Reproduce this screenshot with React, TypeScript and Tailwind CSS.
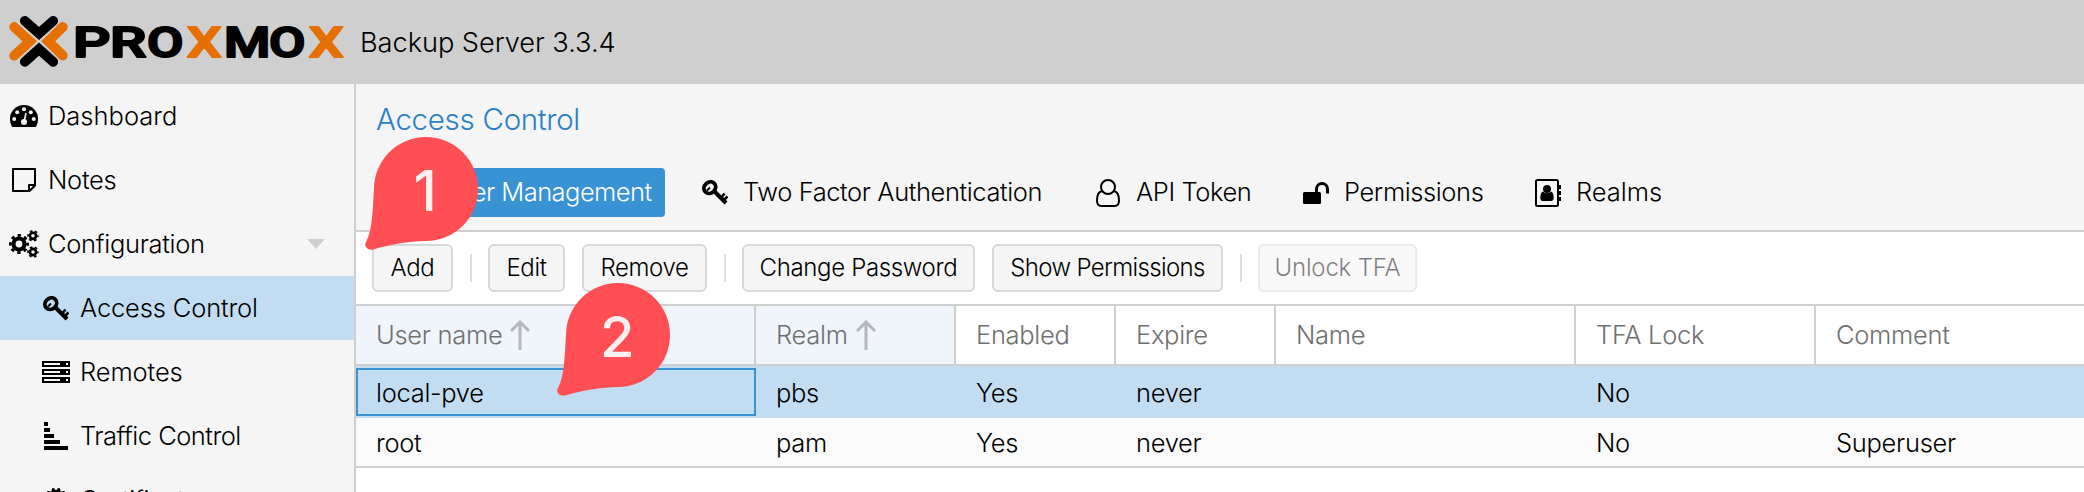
import { useState } from "react";
import type { ReactNode } from "react";
import { FaCertificate } from "react-icons/fa";

const GaugeIcon = () => (
    <svg viewBox="0 0 28 22" className="w-[28px] h-[22px]">
        <path d="M2.2 22C.8 19.8 0 17 0 14a14 14 0 0 1 28 0c0 3-.8 5.8-2.2 8z" fill="#000" />
        <g fill="#f5f5f5">
            <circle cx="4.2" cy="14" r="2" />
            <circle cx="7.2" cy="7.2" r="2" />
            <circle cx="14" cy="4.2" r="2" />
            <circle cx="20.8" cy="7.2" r="2" />
            <circle cx="23.8" cy="14" r="2" />
            <circle cx="14" cy="17" r="3" />
        </g>
        <path d="M14 17l2-9" stroke="#f5f5f5" strokeWidth="1.6" />
    </svg>
);

const NoteIcon = () => (
    <svg viewBox="0 0 24 24" className="w-[24px] h-[24px]" fill="none" stroke="#000" strokeWidth="2" strokeLinejoin="round">
        <path d="M1 1h22v16.5L17.5 23H1z" />
        <path d="M17 23v-6h6" />
    </svg>
);

const Gear = ({ cx, cy, r, hole, teeth }: { cx: number; cy: number; r: number; hole: number; teeth: number }) => {
    const outer = r * 0.86;
    const dash = (2 * Math.PI * outer) / (teeth * 2);
    const body = (r * 0.74 + hole) / 2;
    return (
        <>
            <circle cx={cx} cy={cy} r={body} fill="none" stroke="#000" strokeWidth={r * 0.78 - hole} />
            <circle
                cx={cx}
                cy={cy}
                r={outer}
                fill="none"
                stroke="#000"
                strokeWidth={r * 0.28}
                strokeDasharray={`${dash} ${dash}`}
                strokeDashoffset={dash / 2}
            />
        </>
    );
};

const CogsIcon = () => (
    <svg viewBox="0 0 30 28" className="w-[30px] h-[28px]">
        <Gear cx={10} cy={14} r={10} hole={3.6} teeth={8} />
        <Gear cx={24} cy={5.8} r={5.8} hole={1.9} teeth={6} />
        <Gear cx={24} cy={22} r={5.8} hole={1.9} teeth={6} />
    </svg>
);

const KeyIcon = () => (
    <svg viewBox="0 0 26 25" className="w-[26px] h-[25px]" fill="none" stroke="#000">
        <ellipse cx="7.8" cy="7.6" rx="6.2" ry="5.4" strokeWidth="3.8" transform="rotate(-42 7.8 7.6)" />
        <path d="M5 10.5l3-3" strokeWidth="2" />
        <path d="M12.5 11.5L24 23" strokeWidth="4" />
        <path d="M18.5 18.5l4-5M22 20l3.5-3.5" strokeWidth="2.6" />
    </svg>
);

const ServerIcon = () => (
    <svg viewBox="0 0 28 22" className="w-[28px] h-[22px]">
        {[0, 8, 16].map((y) => (
            <g key={y}>
                <rect y={y} width="28" height="6" fill="#000" />
                <rect x="2" y={y + 2} width="16" height="2" fill="#f5f5f5" />
                <rect x="24" y={y + 2} width="2" height="2" fill="#f5f5f5" />
            </g>
        ))}
    </svg>
);

const TrafficIcon = () => (
    <svg viewBox="0 0 24 28" className="w-[24px] h-[28px]">
        <path d="M0 0h4v4H0zM0 6h6v4H0zM0 12h10v4H0zM0 18h16v4H0zM0 24h24v4H0z" />
    </svg>
);

const UserIcon = ({ color = "#000" }: { color?: string }) => (
    <svg viewBox="0 0 24 28" className="w-[24px] h-[28px]" fill="none" stroke={color} strokeWidth="2">
        <circle cx="12" cy="8" r="7" />
        <path d="M6.4 12C3 12.400 1 16 1 21.500 1 25 3 27 5.500 27h13c2.500 0 4.500-2 4.500-5.500 0-5.500-2-9.100-5.400-9.500" />
    </svg>
);

const UnlockIcon = () => (
    <svg viewBox="0 0 26 22" className="w-[26px] h-[22px]">
        <rect y="10" width="18" height="12" rx="1.500" />
        <path d="M13.500 11V7a5.500 5.500 0 0 1 11 0v4.500" fill="none" stroke="#000" strokeWidth="3" />
    </svg>
);

const AddressBookIcon = () => (
    <svg viewBox="0 0 26 28" className="w-[26px] h-[28px]">
        <rect x="1" y="1" width="22" height="26" rx="1.500" fill="none" stroke="#000" strokeWidth="2" />
        <path d="M23 6h3v4h-3zM23 12h3v4h-3zM23 18h3v4h-3z" />
        <circle cx="12" cy="10" r="4" />
        <path d="M8 12.500c1 1 2.400 1.700 4 1.700s3-.7 4-1.700c1.800.6 2.700 3 2.700 6.200 0 2-1 3.300-2.700 3.300H8c-1.700 0-2.700-1.300-2.700-3.300 0-3.200.9-5.600 2.700-6.200z" />
    </svg>
);

const SortArrow = () => (
    <svg viewBox="0 0 20 30" className="w-[20px] h-[30px]" fill="none" stroke="#b5b8ba" strokeWidth="3">
        <path d="M10 30V2M1 11l9-9 9 9" />
    </svg>
);

const wordmark = [
    { char: "P", x: 73, width: 37, color: "#000" },
    { char: "R", x: 110, width: 36, color: "#000" },
    { char: "O", x: 147, width: 36, color: "#000" },
    { char: "X", x: 187, width: 34, color: "#e57000" },
    { char: "M", x: 224, width: 46, color: "#000" },
    { char: "O", x: 269, width: 36, color: "#000" },
    { char: "X", x: 309, width: 34, color: "#e57000" },
];

const Logo = () => (
    <svg viewBox="0 0 350 84" className="w-[350px] h-[84px] shrink-0">
        <g fill="none" strokeLinecap="round" strokeWidth="9.8">
            <path d="M24.800 20.800L39 33.500l14.200-12.700M24.800 61.800L39 49.100l14.200 12.700" stroke="#000" />
            <path d="M14.200 27l15.600 14.300-15.600 14.300M62.800 27l-14.600 14.300 14.600 14.300" stroke="#e57000" />
        </g>
        <g className="font-['Roboto',sans-serif] font-medium text-[43px]">
            {wordmark.map((l) => (
                <text
                    key={l.x}
                    x={l.x}
                    y="56.600"
                    textLength={l.width}
                    lengthAdjust="spacingAndGlyphs"
                    fill={l.color}
                    stroke={l.color}
                    strokeWidth="2.200"
                    strokeLinejoin="round"
                >
                    {l.char}
                </text>
            ))}
        </g>
    </svg>
);

const Pin = ({ label }: { label: string }) => (
    <svg viewBox="0 0 116 116" className="w-[116px] h-[116px]">
        <path
            d="M62 1a52 52 0 0 1 0 104C45 105.500 25 108.500 9 113.500 3.500 115-.5 110 2 106 8.500 94 8.500 75 10 53A52 52 0 0 1 62 1z"
            fill="#ff4f54"
        />
        <text x="61" y="75" textAnchor="middle" fill="#fff0ef" className="font-['Inter',sans-serif] font-medium text-[56px]">
            {label}
        </text>
    </svg>
);

type NavItem = { label: string; icon: ReactNode; child?: boolean; expandable?: boolean; tracking?: string };

const navItems: NavItem[] = [
    { label: "Dashboard", icon: <GaugeIcon />, tracking: "tracking-[0px]" },
    { label: "Notes", icon: <NoteIcon /> },
    { label: "Configuration", icon: <CogsIcon />, expandable: true },
    { label: "Access Control", icon: <KeyIcon />, child: true, tracking: "tracking-[-0.15px]" },
    { label: "Remotes", icon: <ServerIcon />, child: true, tracking: "tracking-[-0.1px]" },
    { label: "Traffic Control", icon: <TrafficIcon />, child: true, tracking: "tracking-[-0.5px]" },
    { label: "Certificates", icon: <FaCertificate className="w-[24px] h-[24px]" />, child: true },
];

const tabs = [
    { label: "User Management", width: "w-[280px] mr-[22px] tracking-[-0.55px]", icon: <UserIcon color="#fff" /> },
    { label: "Two Factor Authentication", width: "w-[370px] mr-[23px] tracking-[-0.4px]", icon: <KeyIcon /> },
    { label: "API Token", width: "w-[184px] mr-[24px] tracking-[-0.4px]", icon: <UserIcon /> },
    { label: "Permissions", width: "w-[209px] mr-[23px] tracking-[-0.4px]", icon: <UnlockIcon /> },
    { label: "Realms", width: "w-[160px] tracking-[0px]", icon: <AddressBookIcon /> },
];

const columns = [
    { label: "User name", width: "w-[400px]", sorted: true },
    { label: "Realm", width: "w-[200px]", sorted: true },
    { label: "Enabled", width: "w-[160px]" },
    { label: "Expire", width: "w-[160px]" },
    { label: "Name", width: "w-[300px]" },
    { label: "TFA Lock", width: "w-[240px]" },
    { label: "Comment", width: "flex-1" },
];

const rows = [
    ["local-pve", "pbs", "Yes", "never", "", "No", ""],
    ["root", "pam", "Yes", "never", "", "No", "Superuser"],
];

type ToolButtonProps = { label: string; width: string; tracking?: string; disabled?: boolean };

const ToolButton = ({ label, width, tracking = "tracking-[-0.35px]", disabled }: ToolButtonProps) => (
    <button
        disabled={disabled}
        className={`${width} ${tracking} h-[48px] shrink-0 rounded-md border-2 border-[#d8d8d8] bg-[#f5f5f5] text-[24px] whitespace-nowrap ${disabled ? "opacity-50" : ""}`}
    >
        {label}
    </button>
);

const Separator = () => <div className="w-[2px] h-[28px] ml-[17px] mr-[16px] shrink-0 bg-[#dedede]" />;

const App = () => {
    const [activeNav, setActiveNav] = useState("Access Control");
    const [activeTab, setActiveTab] = useState("User Management");
    const [selected, setSelected] = useState(0);

    return (
        <div className="relative flex flex-col w-[2084px] h-[492px] overflow-hidden bg-white text-black font-['Inter','Liberation_Sans',sans-serif] font-light text-[25.5px] tracking-[-0.3px]">
            <header className="flex items-center h-[84px] shrink-0 bg-[#cfcfcf]">
                <Logo />
                <span className="ml-[10px] pt-[2px] text-[27.2px] tracking-[-0.05px]">Backup Server 3.3.4</span>
            </header>
            <div className="flex flex-1 min-h-0">
                <nav className="flex flex-col w-[356px] shrink-0 border-r-2 border-[#cfcfcf] bg-[#f5f5f5]">
                    {navItems.map((item) => (
                        <button
                            key={item.label}
                            onClick={() => setActiveNav(item.label)}
                            className={`flex items-center h-[64px] shrink-0 ${item.tracking ?? ""} ${item.child ? "pl-[40px]" : "pl-[8px]"} ${activeNav === item.label ? "bg-[#c2ddf2]" : ""}`}
                        >
                            <span className="flex justify-center w-[32px] mr-[8px]">{item.icon}</span>
                            {item.label}
                            {item.expandable && (
                                <svg viewBox="0 0 18 10" className="w-[18px] h-[10px] ml-auto mr-[29px]" fill="#cfcfcf">
                                    <path d="M0 0h18l-9 10z" />
                                </svg>
                            )}
                        </button>
                    ))}
                </nav>
                <main className="flex flex-col flex-1 min-w-0">
                    <div className="h-[148px] shrink-0 border-b-2 border-[#cfcfcf] bg-[#f5f5f5] pl-[20px]">
                        <h1 className="h-[84px] pt-[14px] leading-[42px] text-[29.5px] text-[#2a80c7]">Access Control</h1>
                        <div className="flex pl-[9px]">
                            {tabs.map((tab) => (
                                <button
                                    key={tab.label}
                                    onClick={() => setActiveTab(tab.label)}
                                    className={`flex items-center h-[49px] shrink-0 pl-[14px] rounded whitespace-nowrap ${tab.width} ${activeTab === tab.label ? "bg-[#3892d4] text-white" : ""}`}
                                >
                                    <span className="flex justify-center w-[28px] mr-[14px]">{tab.icon}</span>
                                    {tab.label}
                                </button>
                            ))}
                        </div>
                    </div>
                    <div className="flex items-center h-[74px] shrink-0 border-b-2 border-[#cfcfcf] pl-[16px]">
                        <ToolButton label="Add" width="w-[81px]" />
                        <Separator />
                        <ToolButton label="Edit" width="w-[77px] mr-[17px]" />
                        <ToolButton label="Remove" width="w-[125px]" />
                        <Separator />
                        <ToolButton label="Change Password" width="w-[233px] mr-[17px]" />
                        <ToolButton label="Show Permissions" width="w-[231px]" tracking="tracking-[-0.65px]" />
                        <Separator />
                        <ToolButton label="Unlock TFA" width="w-[159px]" tracking="tracking-[-0.2px]" disabled />
                    </div>
                    <div className="flex h-[60px] shrink-0 border-b-2 border-[#cfcfcf] text-[#707070]">
                        {columns.map((col) => (
                            <div
                                key={col.label}
                                className={`flex items-center gap-[8px] shrink-0 pl-[20px] border-[#cfcfcf] ${col.width} ${col.label !== "Comment" ? "border-r-2" : ""} ${col.sorted ? "bg-[#f0f5fb]" : ""}`}
                            >
                                {col.label}
                                {col.sorted && <SortArrow />}
                            </div>
                        ))}
                    </div>
                    <div className="border-b-2 border-[#cfcfcf]">
                        {rows.map((row, i) => (
                            <div
                                key={row[0]}
                                onClick={() => setSelected(i)}
                                className={`flex ${i === 0 ? "h-[52px] py-[2px]" : "h-[48px]"} ${selected === i ? "bg-[#c2ddf2]" : "bg-[#fafafa]"}`}
                            >
                                {row.map((cell, j) => (
                                    <div
                                        key={columns[j].label}
                                        className={`flex items-center shrink-0 border-2 pl-[18px] pt-[2px] ${columns[j].width} ${selected === i && j === 0 ? "border-[#3892d4]" : "border-transparent"}`}
                                    >
                                        {cell}
                                    </div>
                                ))}
                            </div>
                        ))}
                    </div>
                </main>
            </div>
            <div className="absolute left-[364px] top-[136px]">
                <Pin label="1" />
            </div>
            <div className="absolute left-[556px] top-[282px]">
                <Pin label="2" />
            </div>
        </div>
    );
};

export default App;
